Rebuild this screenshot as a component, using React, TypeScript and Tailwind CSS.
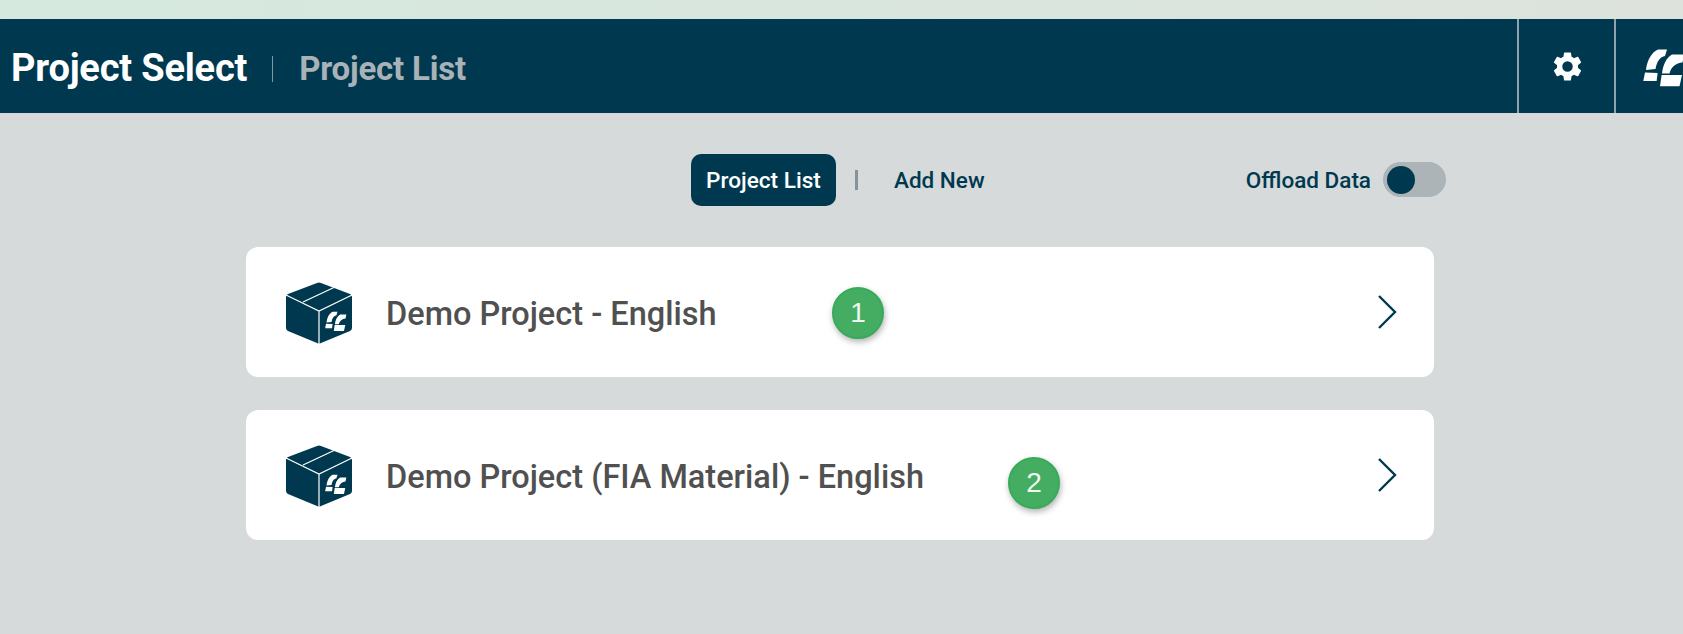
import React from 'react'

const logoParts = (
  <>
    <path d="M15 1.5 L24 1.5 L22 8 C17 9 14 13 12.5 21 L3 22 C4 12 9 4 15 1.5 Z" />
    <path d="M2 24.5 L14.6 25 L13.6 33 L0.3 33 Z" />
    <path d="M29 6.5 L41 6.5 L39.5 14.5 C33 15 28 19 26.5 25.5 L19 25.5 C20 17 23 10 29 6.5 Z" />
    <path d="M18.6 27 L39 27 L36.5 38.3 L17 38.3 Z" />
  </>
)

const BoxIcon = () => (
  <svg viewBox="0 0 68 64" className="w-[68px] h-[64px] shrink-0 mt-[2px]">
    <path d="M32 2 Q34 1 36 2 L65 13 Q67 14 67 16 L67 47 Q67 49 65 50 L36 62 Q34 63 32 62 L3 50 Q1 49 1 47 L1 16 Q1 14 3 13 Z" fill="#00394f" />
    <path d="M1 14 L34 30 L67 14 M34 30 L34 64 M18 21 L50 6" stroke="#fff" strokeWidth="1.2" fill="none" />
    <g transform="translate(40 30) scale(0.52)" fill="#fff">{logoParts}</g>
  </svg>
)

const Gear = () => (
  <svg viewBox="0 0 24 24" className="w-[35px] h-[35px] ml-[2px] text-white" fill="currentColor">
    <path d="M19.14 12.94c.04-.3.06-.61.06-.94s-.02-.64-.07-.94l2.03-1.58a.49.49 0 0 0 .12-.61l-1.92-3.32a.49.49 0 0 0-.59-.22l-2.39.96a7 7 0 0 0-1.62-.94l-.36-2.54a.48.48 0 0 0-.48-.41h-3.84a.48.48 0 0 0-.47.41l-.36 2.54c-.59.24-1.13.57-1.62.94l-2.39-.96a.48.48 0 0 0-.59.22L2.74 8.87a.48.48 0 0 0 .12.61l2.03 1.58c-.05.3-.09.63-.09.94s.02.64.07.94l-2.03 1.58a.49.49 0 0 0-.12.61l1.92 3.32c.12.22.37.29.59.22l2.39-.96c.5.38 1.03.7 1.62.94l.36 2.54c.05.24.24.41.48.41h3.84c.24 0 .44-.17.47-.41l.36-2.54c.59-.24 1.13-.56 1.62-.94l2.39.96c.22.08.47 0 .59-.22l1.92-3.32a.48.48 0 0 0-.12-.61zM12 15.6a3.6 3.6 0 1 1 0-7.2 3.6 3.6 0 0 1 0 7.2z" />
  </svg>
)

const projects = [
  { name: 'Demo Project - English', badge: '1', badgePos: 'left-[586px] top-[40px]' },
  { name: 'Demo Project (FIA Material) - English', badge: '2', badgePos: 'left-[762px] top-[47px]' },
]

const App = () => {
  return (
    <div className="w-full h-[634px] overflow-hidden bg-[#d6dadb] font-['Roboto',sans-serif]">
      <div className="h-[19px] bg-gradient-to-r from-[#d5e9df] to-[#dde3dc]" />
      <header className="h-[94px] bg-[#00394f] flex items-stretch">
        <div className="flex-1 flex items-center pl-[11px] pt-[5px]">
          <h1 className="text-[38px] font-bold text-white tracking-[-0.2px]">Project Select</h1>
          <span className="w-px h-[26px] bg-[#7f98a3] ml-[25px] mr-[26px]" />
          <h2 className="text-[33px] font-bold text-[#a9b2b7] tracking-[-0.2px]">Project List</h2>
        </div>
        <div className="w-[97px] border-l-2 border-[#8fa2ab] flex items-center justify-center">
          <Gear />
        </div>
        <div className="w-[69px] border-l-2 border-[#8fa2ab] overflow-hidden flex items-center pl-[27px] pt-[4px]">
          <svg viewBox="0 0 46 41" className="w-[46px] h-[41px] shrink-0 text-white" fill="currentColor">
            {logoParts}
          </svg>
        </div>
      </header>

      <main className="pl-[246px]">
        <div className="relative w-[1200px] h-[52px] mt-[41px] flex items-center pl-[445px]">
          <button className="h-[52px] w-[145px] pt-[2px] rounded-[10px] bg-[#00394f] text-white text-[22.6px] font-medium">Project List</button>
          <span className="w-[3px] h-[20px] bg-[#83929b] ml-[19px]" />
          <button className="ml-[36px] pt-[2px] text-[22.5px] font-medium text-[#00394f]">Add New</button>
          <div className="ml-auto flex items-center gap-[12px]">
            <span className="pt-[2px] text-[22.5px] font-medium text-[#00394f]">Offload Data</span>
            <span className="-mt-px w-[63px] h-[35px] rounded-full bg-[#acb4b8] flex items-center pl-[4px]">
              <span className="w-[28px] h-[28px] rounded-full bg-[#00394f]" />
            </span>
          </div>
        </div>

        <div className="w-[1188px] mt-[41px] flex flex-col gap-[33px]">
          {projects.map((p) => (
            <div key={p.badge} className="relative h-[130px] bg-white rounded-[12px] flex items-center pl-[39px] pr-[37px]">
              <BoxIcon />
              <span className="ml-[33px] mt-[4px] text-[32.5px] font-medium text-[#505050]">{p.name}</span>
              <span className={`absolute ${p.badgePos} w-[52px] h-[52px] rounded-full bg-[#45ad62] border-2 border-[#37aa5c] shadow-[1px_3px_6px_rgba(0,0,0,0.3)] flex items-center justify-center text-[#eef8f1] text-[28px] font-['Liberation_Sans',sans-serif]`}>
                {p.badge}
              </span>
              <svg viewBox="0 0 20 34" className="ml-auto w-[20px] h-[34px]" fill="none" stroke="#00394f" strokeWidth="2.4">
                <path d="M2 1 L18 17 L2 33" />
              </svg>
            </div>
          ))}
        </div>
      </main>
    </div>
  )
}

export default App
